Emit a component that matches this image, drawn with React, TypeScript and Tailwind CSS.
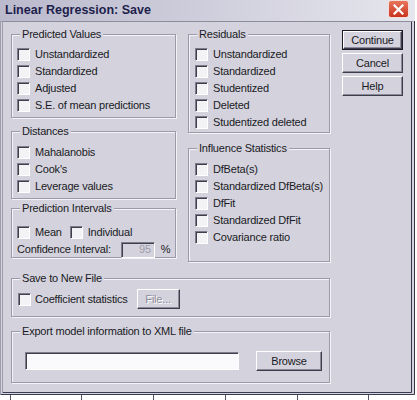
import React from 'react'

const BODY = 'bg-[#d4d3dd]'

function CheckBox() {
  return (
    <span className="block w-[13px] h-[13px] shrink-0 bg-[#f3f3f6] border border-t-[#7d7c8a] border-l-[#7d7c8a] border-b-white border-r-white shadow-[inset_1px_1px_0_#3e3e4c]" />
  )
}

function Check({ label }: { label: string }) {
  return (
    <div className="flex items-center h-[17px] gap-[5px]">
      <CheckBox />
      <span>{label}</span>
    </div>
  )
}

function Group({ title, className, children }: { title: string; className: string; children?: React.ReactNode }) {
  return (
    <div className={`relative border border-[#9b9aa8] shadow-[inset_1px_1px_0_#f4f4f8,1px_1px_0_#f4f4f8] ${className}`}>
      <span className="absolute left-[8px] top-[-8px] px-[2px] leading-[14px] bg-[#d4d3dd]">{title}</span>
      {children}
    </div>
  )
}

function Button({ label, disabled, className }: { label: string; disabled?: boolean; className: string }) {
  return (
    <div
      className={`flex items-center justify-center bg-[#d4d3dd] border border-t-white border-l-white border-b-[#3c3c4a] border-r-[#3c3c4a] shadow-[inset_-1px_-1px_0_#8b8a98] ${disabled ? 'text-[#8e8d9b] [text-shadow:1px_1px_0_#fff]' : ''} ${className}`}
    >
      {label}
    </div>
  )
}

export default function App() {
  return (
    <div
      className="w-[417px] h-[400px] bg-white overflow-hidden text-[11px] tracking-[-0.2px] text-[#1a1a24]"
      style={{ fontFamily: '"Liberation Sans", Arial, sans-serif' }}
    >
      <div className="w-[415px]">
        {/* title bar */}
        <div className="h-[21px] flex items-start justify-between bg-gradient-to-r from-[#bbbacd] via-[#cfcedc] to-[#e6e6ee] pl-[5px] pr-[6px]">
          <span className="mt-[3px] text-[12.5px] font-bold tracking-normal text-[#1d1f4c] leading-[15px]">
            Linear Regression: Save
          </span>
          <div className="w-[21px] h-[18px] rounded-[3px] bg-gradient-to-b from-[#e8745a] to-[#c8301c] border border-[#f5dcd6] flex items-center justify-center">
            <svg width="11" height="11" viewBox="0 0 11 11">
              <path d="M1.5 1.5 L9.5 9.5 M9.5 1.5 L1.5 9.5" stroke="#fff" strokeWidth="2.2" strokeLinecap="square" />
            </svg>
          </div>
        </div>

        {/* dialog body */}
        <div className={`${BODY} h-[374px] border-t border-t-[#8d8c9c] border-l-[3px] border-l-[#9d9cab] border-r-[4px] border-r-[#34344a] border-b-[3px] border-b-[#3a3a50] border-double pl-[8px] pt-[8px] flex`}>
          <div className="w-[319px] pt-[4px] flex flex-col">
            <div className="flex gap-[12px]">
              <div className="w-[165px] flex flex-col">
                <Group title="Predicted Values" className="h-[84px] pt-[11px] pl-[5px]">
                  <Check label="Unstandardized" />
                  <Check label="Standardized" />
                  <Check label="Adjusted" />
                  <Check label="S.E. of mean predictions" />
                </Group>
                <Group title="Distances" className="mt-[13px] h-[68px] pt-[12px] pl-[5px]">
                  <Check label="Mahalanobis" />
                  <Check label="Cook's" />
                  <Check label="Leverage values" />
                </Group>
                <Group title="Prediction Intervals" className="mt-[9px] h-[50px] pt-[15px] pl-[5px]">
                  <div className="flex items-center h-[17px]">
                    <CheckBox />
                    <span className="ml-[5px]">Mean</span>
                    <span className="ml-[8px] flex">
                      <CheckBox />
                    </span>
                    <span className="ml-[5px]">Individual</span>
                  </div>
                  <div className="flex items-center h-[17px]">
                    <span>Confidence Interval:</span>
                    <span className="ml-[10px] w-[34px] h-[16px] flex items-center justify-end pr-[3px] bg-[#d4d3dd] border border-t-[#7d7c8a] border-l-[#7d7c8a] border-b-white border-r-white shadow-[inset_1px_1px_0_#3e3e4c] text-[#9c9baa]">
                      95
                    </span>
                    <span className="ml-[6px]">%</span>
                  </div>
                </Group>
              </div>
              <div className="w-[142px] flex flex-col">
                <Group title="Residuals" className="h-[99px] pt-[11px] pl-[6px]">
                  <Check label="Unstandardized" />
                  <Check label="Standardized" />
                  <Check label="Studentized" />
                  <Check label="Deleted" />
                  <Check label="Studentized deleted" />
                </Group>
                <Group title="Influence Statistics" className="mt-[15px] h-[114px] pt-[12px] pl-[6px]">
                  <Check label="DfBeta(s)" />
                  <Check label="Standardized DfBeta(s)" />
                  <Check label="DfFit" />
                  <Check label="Standardized DfFit" />
                  <Check label="Covariance ratio" />
                </Group>
              </div>
            </div>

            <Group title="Save to New File" className="mt-[16px] h-[39px] pt-[10px] pl-[6px]">
              <div className="flex items-center h-[20px]">
                <CheckBox />
                <span className="ml-[4px]">Coefficient statistics</span>
                <Button label="File..." disabled className="ml-[9px] w-[43px] h-[20px]" />
              </div>
            </Group>

            <Group title="Export model information to XML file" className="mt-[14px] h-[52px] pt-[19px] pl-[13px]">
              <div className="flex items-center h-[20px]">
                <span className="w-[214px] h-[18px] bg-[#fafafc] border border-t-[#7d7c8a] border-l-[#7d7c8a] border-b-white border-r-white shadow-[inset_1px_1px_0_#3e3e4c]" />
                <Button label="Browse" className="ml-[17px] w-[66px] h-[20px]" />
              </div>
            </Group>
          </div>

          <div className="ml-[12px] w-[61px] flex flex-col gap-[3px]">
            <div className="border border-[#1c1c2a]">
              <Button label="Continue" className="h-[18px]" />
            </div>
            <Button label="Cancel" className="h-[20px]" />
            <Button label="Help" className="h-[20px]" />
          </div>
        </div>

        {/* sheet behind the dialog */}
        <div className="h-[5px] flex pl-[10px]">
          <div className="w-[71px] border-l border-[#55556a]" />
          <div className="w-[72px] border-l border-[#55556a]" />
          <div className="w-[72px] border-l border-[#55556a]" />
          <div className="w-[72px] border-l border-[#55556a]" />
          <div className="w-[71px] border-l border-[#55556a]" />
          <div className="w-[40px] border-l border-[#55556a]" />
        </div>
      </div>
    </div>
  )
}
